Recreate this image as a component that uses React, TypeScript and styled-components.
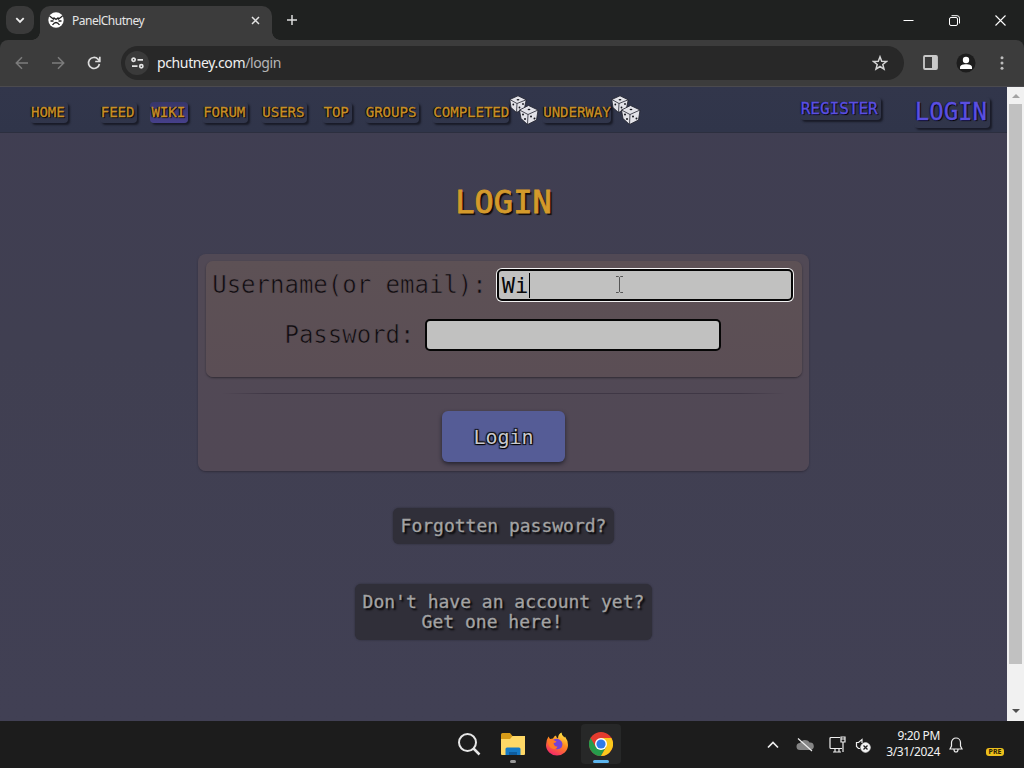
import React from "react";
import styled, { createGlobalStyle, css } from "styled-components";

const mono = `"DejaVu Sans Mono", "Liberation Mono", monospace`;
const ui = `"Noto Sans", "Open Sans", sans-serif`;

const navItems = [
  { label: "HOME", gap: 32 },
  { label: "FEED", gap: 13 },
  { label: "WIKI", gap: 14, visited: true },
  { label: "FORUM", gap: 13 },
  { label: "USERS", gap: 15 },
  { label: "TOP", gap: 13 },
  { label: "GROUPS", gap: 13 },
  { label: "COMPLETED", gap: 3, dice: true },
  { label: "UNDERWAY", gap: 0, dice: true },
];

const Dice = () => (
  <svg width="30" height="30" viewBox="0 0 30 30">
    <g stroke="#20212c" strokeWidth=".8" strokeLinejoin="round">
      <path d="M.8 4.500 9 .8l8.200 4L15.500 13 7.500 17.500 2 12.500z" fill="#e2e2e8" />
      <path d="M.8 4.500 8 8.500 17.200 4.800M8 8.500 7.500 17.500" fill="none" />
      <path d="M10.500 15 19.500 10.500l9.500 4.500-1.500 10-9 4.500-6.500-6z" fill="#e2e2e8" />
      <path d="M10.500 15 19 19.500 29 15M19 19.500 18.500 29.500" fill="none" />
    </g>
    <g fill="#15161d">
      <ellipse cx="9" cy="4.700" rx="1.400" ry=".8" />
      <circle cx="4.300" cy="9.500" r=".9" />
      <circle cx="10.500" cy="12.500" r=".9" />
      <circle cx="14" cy="9" r=".9" />
      <ellipse cx="20" cy="14.500" rx="1.400" ry=".8" />
      <circle cx="14" cy="19.500" r="1" />
      <circle cx="16" cy="24" r="1" />
      <circle cx="22" cy="21.500" r="1" />
      <circle cx="25.500" cy="23.500" r="1" />
    </g>
  </svg>
);

const App = () => {
  return (
    <Desktop>
      <GlobalStyle />
      <TabStrip>
        <TabSearch>
          <svg width="10" height="7" viewBox="0 0 10 7" fill="none" stroke="#eee" strokeWidth="1.800">
            <path d="m1.300 1.200 3.700 3.800 3.700-3.800" />
          </svg>
        </TabSearch>
        <Tab>
          <svg width="16" height="16" viewBox="0 0 16 16">
            <circle cx="8" cy="8" r="7.700" fill="#fff" />
            <path
              d="M1.500 4 6 7.500M14.500 4 10 7.500M5.500 5.500 8 7.500l2.500-2M2.500 9h3M10.500 9h3M4.500 13Q8 8 11.500 13"
              fill="none"
              stroke="#222"
              strokeWidth="1.300"
            />
          </svg>
          <TabTitle>PanelChutney</TabTitle>
          <svg width="9" height="9" viewBox="0 0 9 9" stroke="#e4e4e4" strokeWidth="1.500">
            <path d="m1 1 7 7m0-7-7 7" />
          </svg>
        </Tab>
        <NewTab>
          <svg width="12" height="12" viewBox="0 0 12 12" stroke="#ddd" strokeWidth="1.500">
            <path d="M6 1v10M1 6h10" />
          </svg>
        </NewTab>
        <WindowButtons>
          <svg width="11" height="11" viewBox="0 0 11 11" stroke="#fff">
            <path d="M.5 5.500h10" />
          </svg>
          <svg width="11" height="11" viewBox="0 0 11 11" fill="none" stroke="#fff">
            <rect x=".5" y="2.500" width="8" height="8" rx="1.500" />
            <path d="M2.500.7H8a2.500 2.500 0 0 1 2.500 2.500v5.300" />
          </svg>
          <svg width="11" height="11" viewBox="0 0 11 11" stroke="#fff" strokeWidth="1.100">
            <path d="m.5.5 10 10m0-10-10 10" />
          </svg>
        </WindowButtons>
      </TabStrip>

      <ToolbarBack>
        <Toolbar>
          <ToolIcons>
            <svg width="14" height="14" viewBox="0 0 14 14" fill="none" stroke="#7c7c7c" strokeWidth="1.500">
              <path d="M13 7H1.500M7 1.300 1.300 7 7 12.700" />
            </svg>
            <svg width="14" height="14" viewBox="0 0 14 14" fill="none" stroke="#7c7c7c" strokeWidth="1.500">
              <path d="M1 7h11.500M7 1.300 12.700 7 7 12.700" />
            </svg>
            <svg width="14" height="14" viewBox="0 0 14 14" fill="none" stroke="#ddd" strokeWidth="1.700">
              <path d="M12.400 8A5.500 5.500 0 1 1 11 3.200L12.500 5" />
              <path d="M12.800.8v4.700H8.200" />
            </svg>
          </ToolIcons>
          <AddressBar>
            <SiteInfo>
              <svg width="13" height="12" viewBox="0 0 13 12" fill="none" stroke="#e3e3e3" strokeWidth="1.700">
                <circle cx="2.600" cy="2.800" r="1.600" />
                <path d="M6.500 2.800H12M1 9.200h5.500" />
                <circle cx="10.300" cy="9.200" r="1.600" />
              </svg>
            </SiteInfo>
            <Url>
              pchutney.com<span>/login</span>
            </Url>
            <svg width="16" height="16" viewBox="0 0 16 16" fill="none" stroke="#d4d4d4" strokeWidth="1.500">
              <path d="m8 1.800 1.700 4.400 4.800.3-3.700 3 1.200 4.600L8 11.500l-4 2.600 1.200-4.600-3.700-3 4.800-.3z" />
            </svg>
          </AddressBar>
          <SideIcons>
            <svg width="15" height="15" viewBox="0 0 15 15">
              <rect x="1" y="1" width="13" height="13" rx="1" fill="none" stroke="#c9c9c9" strokeWidth="1.800" />
              <path d="M9 1h5v13H9z" fill="#c9c9c9" />
            </svg>
            <svg width="20" height="20" viewBox="0 0 20 20">
              <circle cx="10" cy="10" r="9.500" fill="#1d1d1d" />
              <circle cx="10" cy="7" r="3.200" fill="#fff" />
              <path d="M4 16v-1.500C4 12 7 11.300 10 11.300s6 .7 6 3.200V16z" fill="#fff" />
            </svg>
            <MenuDots width="4" height="14" viewBox="0 0 4 14" fill="#bdbdbd">
              <circle cx="2" cy="1.700" r="1.500" />
              <circle cx="2" cy="7" r="1.500" />
              <circle cx="2" cy="12.300" r="1.500" />
            </MenuDots>
          </SideIcons>
        </Toolbar>
      </ToolbarBack>

      <Viewport>
        <Page>
          <Nav>
            {navItems.map((item) => (
              <NavItem key={item.label} $gap={item.gap}>
                <NavLink $visited={item.visited} $wide={item.dice}>
                  {item.label}
                </NavLink>
                {item.dice && (
                  <DiceSlot>
                    <Dice />
                  </DiceSlot>
                )}
              </NavItem>
            ))}
            <Account>
              <AccountLink $size={16}>REGISTER</AccountLink>
              <AccountLink $size={24}>LOGIN</AccountLink>
            </Account>
          </Nav>

          <Title>LOGIN</Title>

          <LoginForm>
            <Fields>
              <Field>
                <Label>Username(or email):</Label>
                <Input $focused>
                  Wi
                  <Caret />
                  <TextPointer width="9" height="17" viewBox="0 0 9 17" fill="none" stroke="#555">
                    <path d="M1 .5h2.500l1 1 1-1H8M4.500 1.500v14M1 16.500h2.500l1-1 1 1H8" />
                  </TextPointer>
                </Input>
              </Field>
              <Field>
                <Label>Password:</Label>
                <Input />
              </Field>
            </Fields>
            <Divider />
            <Submit>Login</Submit>
          </LoginForm>

          <HelpLink $top={37}>Forgotten password?</HelpLink>
          <HelpLink $top={40} $tall>
            Don't have an account yet?
            <span>Get one here!</span>
          </HelpLink>
        </Page>
        <Scrollbar>
          <Arrow $up />
          <Thumb />
          <Arrow />
        </Scrollbar>
      </Viewport>

      <Taskbar>
        <Apps>
          <AppIcon>
            <svg width="24" height="24" viewBox="0 0 24 24" fill="none" stroke="#e6e6e6" strokeWidth="2">
              <circle cx="10.500" cy="10.500" r="8.500" />
              <path d="m16.500 16.500 6 6" strokeWidth="2.500" />
            </svg>
          </AppIcon>
          <AppIcon $indicator="idle">
            <svg width="26" height="24" viewBox="0 0 26 24">
              <path d="M1 2.500Q1 1 2.500 1H10l2.500 3H24q1 0 1 1.500V12H1z" fill="#d79b18" />
              <path d="M1 7h9l2.500-3H25v18q0 1-1 1H2q-1 0-1-1z" fill="#ffd866" />
              <path d="M5.500 23v-6q0-1.500 1.500-1.500h12q1.500 0 1.500 1.500v6z" fill="#167ac6" />
              <path d="M9 20h8v3H9z" fill="#0e5c9e" />
            </svg>
          </AppIcon>
          <AppIcon>
            <svg width="24" height="24" viewBox="0 0 24 24">
              <defs>
                <linearGradient id="fox" x1=".8" y1="0" x2=".3" y2="1">
                  <stop offset="0" stopColor="#fff04a" />
                  <stop offset=".45" stopColor="#ff8a1e" />
                  <stop offset="1" stopColor="#f5246b" />
                </linearGradient>
              </defs>
              <path
                d="M3.500 4.500 5 7l3-.5Q9 4 11 3.500q0 2 2 3Q13 2 16.500.5q0 3 3 5l.5-1q3 4 3 8.500a11 10.500 0 0 1-22 0Q1 8 3.500 4.500z"
                fill="url(#fox)"
              />
              <path d="M7 9q4-4 8-1 4 3 1.500 7.500-3 3-7.500 1 3 0 3.500-2-3 .5-5.500-5.500z" fill="#7543d5" />
              <path d="M3 9q3-3 5.500-1l3 1.500q-1 1.500-3 1.500 0 4 4 4.500-3 3-6.500.500-3-2-3-7z" fill="#ff7b24" />
            </svg>
          </AppIcon>
          <AppIcon $indicator="active">
            <svg width="24" height="24" viewBox="0 0 24 24">
              <circle cx="12" cy="12" r="12" fill="#e33b2e" />
              <path d="M1.600 6A12 12 0 0 0 12 24l5.200-9L12 12 6.800 15z" fill="#269b4b" />
              <path d="M22.400 6H12l5.200 9L12 24A12 12 0 0 0 22.400 6z" fill="#fbc91c" />
              <circle cx="12" cy="12" r="6" fill="#fff" />
              <circle cx="12" cy="12" r="4.600" fill="#2f7be8" />
            </svg>
          </AppIcon>
        </Apps>
        <Tray>
          <svg width="12" height="8" viewBox="0 0 12 8" fill="none" stroke="#eee" strokeWidth="1.700">
            <path d="m1 6.500 5-5 5 5" />
          </svg>
          <TrayIcon $left={17}>
            <svg width="18" height="16" viewBox="0 0 18 16">
              <path d="M4 13a3.500 3.500 0 0 1 0-7A5.500 5.500 0 0 1 13.500 5.500 3.700 3.700 0 0 1 14.500 13z" fill="#858585" />
              <path d="m2 1.500 14 12.500" stroke="#eee" strokeWidth="1.200" />
            </svg>
          </TrayIcon>
          <TrayIcon $left={15}>
            <svg width="17" height="17" viewBox="0 0 17 17" fill="none" stroke="#eee" strokeWidth="1.200">
              <path d="M11 1.500H2q-1 0-1 1v9q0 1 1 1h11M4 16h8M6 12.500V16M10 12.500V16" />
              <path d="M12 1h4v5h-4zM14 6v10M12 3h4" />
            </svg>
          </TrayIcon>
          <TrayIcon $left={9}>
            <svg width="16" height="16" viewBox="0 0 16 16" fill="none" stroke="#eee">
              <path d="M5 11.500H3.500L1.500 9.500v-4h2L7 2.500V6" strokeWidth="1.200" />
              <circle cx="10.500" cy="10.500" r="4.700" fill="#f4f4f4" />
              <path d="m8.500 8.500 4 4m0-4-4 4" stroke="#202020" strokeWidth="1.300" />
            </svg>
          </TrayIcon>
          <Clock>
            <div>9:20 PM</div>
            <div>3/31/2024</div>
          </Clock>
          <TrayIcon $left={9}>
            <svg width="14" height="16" viewBox="0 0 14 16" fill="none" stroke="#eee" strokeWidth="1.200">
              <path d="M1 12 2.500 9V5.500a4.500 4.500 0 0 1 9 0V9L13 12zM5 12.500q0 2.500 2 2.500t2-2.500" />
            </svg>
          </TrayIcon>
          <Badge>PRE</Badge>
        </Tray>
      </Taskbar>
    </Desktop>
  );
};

const GlobalStyle = createGlobalStyle`
  * {
    box-sizing: border-box;
  }
  body {
    margin: 0;
    overflow: hidden;
    background: #1c1c1c;
  }
  svg {
    display: block;
    flex-shrink: 0;
  }
`;

const Desktop = styled.div`
  display: flex;
  flex-direction: column;
  width: 1024px;
  height: 768px;
  font-family: ${ui};
`;

/* browser frame */
const TabStrip = styled.div`
  display: flex;
  height: 40px;
  padding-left: 6px;
  background: #1f2120;
`;

const TabSearch = styled.div`
  display: flex;
  align-items: center;
  justify-content: center;
  width: 28px;
  height: 28px;
  margin: 6px 6px 0 0;
  border-radius: 10px;
  background: #3a3a3a;
`;

const Tab = styled.div`
  display: flex;
  align-items: center;
  width: 232px;
  height: 34px;
  margin-top: 6px;
  padding: 0 12px 6px 8px;
  border-radius: 10px 10px 0 0;
  background: #3c3c3c;

  /* flared feet */
  &::before,
  &::after {
    content: "";
    align-self: flex-end;
    width: 8px;
    height: 8px;
    margin-bottom: -6px;
  }
  &::before {
    margin-left: -16px;
    margin-right: 8px;
    background: radial-gradient(circle at 0 0, #1f2120 7.5px, #3c3c3c 8px);
  }
  &::after {
    margin-left: 12px;
    margin-right: -20px;
    background: radial-gradient(circle at 100% 0, #1f2120 7.5px, #3c3c3c 8px);
  }
`;

const TabTitle = styled.div`
  flex: 1;
  margin-left: 8px;
  color: #e6e6e6;
  font-size: 12px;
  line-height: 16px;
  padding-top: 1px;
  letter-spacing: -0.5px;
`;

const NewTab = styled.div`
  margin: 14px 0 0 14px;
`;

const WindowButtons = styled.div`
  display: flex;
  gap: 35px;
  margin: 15px 18px 0 auto;
`;

const ToolbarBack = styled.div`
  background: #1f2120;
`;

const Toolbar = styled.div`
  display: flex;
  align-items: center;
  height: 47px;
  padding-bottom: 1px;
  background: #3c3c3c;
  border-bottom: 1px solid #4b4a4e;
  border-radius: 8px 8px 0 0;
`;

const ToolIcons = styled.div`
  display: flex;
  gap: 22px;
  margin-left: 15px;
`;

const AddressBar = styled.div`
  display: flex;
  align-items: center;
  width: 783px;
  height: 34px;
  margin-left: 20px;
  padding: 0 16px 0 4px;
  border-radius: 17px;
  background: #282828;
`;

const SiteInfo = styled.div`
  display: flex;
  align-items: center;
  justify-content: center;
  width: 24px;
  height: 24px;
  border-radius: 50%;
  background: #3a3a3a;
`;

const Url = styled.div`
  flex: 1;
  margin-left: 8px;
  color: #f0f0f0;
  font-size: 14px;
  letter-spacing: -0.37px;
  span {
    color: #b5b5b5;
  }
`;

const SideIcons = styled.div`
  display: flex;
  align-items: center;
  gap: 18px;
  margin-left: 19px;
`;

const MenuDots = styled.svg`
  margin-left: 6px;
`;

/* site */
const Viewport = styled.div`
  display: flex;
  height: 634px;
`;

const Page = styled.div`
  display: flex;
  flex-direction: column;
  align-items: center;
  width: 1007px;
  background: linear-gradient(#403e52, #403f51 40%, #414054);
  font-family: ${mono};
`;

const Nav = styled.div`
  display: flex;
  align-items: flex-start;
  width: 100%;
  height: 46px;
  padding: 15px 17px 0 30px;
  background: linear-gradient(#32364b, #30354a);
  border-bottom: 1px solid #2c2f3f;
`;

const NavItem = styled.div<{ $gap: number }>`
  display: flex;
  margin-right: ${(p) => p.$gap}px;
`;

const NavLink = styled.div<{ $visited?: boolean; $wide?: boolean }>`
  height: 21px;
  padding: 0 3px 0 1px;
  border-radius: 4px;
  color: #c88f25;
  font-size: 14px;
  line-height: 21px;
  -webkit-text-stroke: 0.35px #c88f25;
  text-shadow: 1px 1px 1px #000, -1px 0 1px #000;
  box-shadow: 2px 2px 2px #191b27;
  ${(p) =>
    p.$visited &&
    css`
      background: linear-gradient(#37366b, #46408a);
    `}
  ${(p) =>
    p.$wide &&
    css`
      padding-right: 0;
    `}
`;

const DiceSlot = styled.div`
  z-index: 1;
  margin: -7px 0 -2px;
`;

const Account = styled.div`
  display: flex;
  gap: 33px;
  margin: -5px 0 0 auto;
`;

const AccountLink = styled.div<{ $size: number }>`
  height: ${(p) => (p.$size > 20 ? 31 : 23)}px;
  padding: 0 3px 0 1px;
  border-radius: 4px;
  color: #5b4fe0;
  font-size: ${(p) => p.$size}px;
  line-height: ${(p) => (p.$size > 20 ? 31 : 23)}px;
  -webkit-text-stroke: 0.4px #5b4fe0;
  text-shadow: 1px 1px 1px #000, -1px 0 1px #0b0b20;
  box-shadow: 2px 2px 2px #191b27;
`;

const Title = styled.div`
  margin-top: 49px;
  color: #d49a2b;
  font-size: 32px;
  line-height: 40px;
  text-shadow: 2px 2px 1px #100b08;
  -webkit-text-stroke: 0.9px #d49a2b;
`;

const LoginForm = styled.div`
  display: flex;
  flex-direction: column;
  align-items: center;
  width: 611px;
  height: 217px;
  margin-top: 32px;
  padding: 7px;
  border-radius: 8px;
  background: linear-gradient(#514955, #514855);
  box-shadow: 0 1px 2px #302d3b;
`;

const Fields = styled.div`
  display: flex;
  flex-direction: column;
  align-items: center;
  gap: 18px;
  width: 596px;
  height: 116px;
  padding: 8px 2px 0 0;
  border-radius: 7px;
  background: linear-gradient(#5d5155, #5b4e55);
  box-shadow: 0 1px 2px #302b34;
`;

const Field = styled.div`
  display: flex;
  gap: 10px;
`;

const Label = styled.div`
  color: #100c10;
  font-size: 24px;
  line-height: 32px;
  -webkit-text-stroke: 0.6px #5c5055;
`;

const Input = styled.div<{ $focused?: boolean }>`
  display: flex;
  width: 296px;
  height: 32px;
  padding-left: 3px;
  border: 2px solid #060606;
  border-radius: 5px;
  background: #c1c1c0;
  color: #080808;
  font-size: 22px;
  line-height: 29px;
  ${(p) =>
    p.$focused &&
    css`
      box-shadow: 0 0 0 1px #f2f2f2;
    `}
`;

const Caret = styled.div`
  width: 1px;
  height: 25px;
  margin: 2px 0 0 1px;
  background: #000;
`;

const TextPointer = styled.svg`
  margin: 5px 0 0 85px;
`;

const Divider = styled.div`
  width: 564px;
  height: 1px;
  margin: 16px 0 17px;
  background: linear-gradient(90deg, #514855, #3f3745 8%, #3f3745 92%, #514855);
`;

const Submit = styled.div`
  width: 123px;
  height: 51px;
  border-radius: 6px;
  background: #555c96;
  color: #c9c9cf;
  font-size: 20px;
  line-height: 52px;
  text-align: center;
  text-shadow: 1px 1px 1px #000, -1px -1px 1px #111, 1px -1px 1px #111, -1px 1px 1px #111;
  box-shadow: 0 2px 4px #25232f;
`;

const HelpLink = styled.div<{ $top: number; $tall?: boolean }>`
  margin-top: ${(p) => p.$top}px;
  height: ${(p) => (p.$tall ? 56 : 36)}px;
  padding: 8px;
  border-radius: 6px;
  background: #302f39;
  color: #a3a3a3;
  font-size: 18px;
  line-height: 20px;
  -webkit-text-stroke: 0.3px #a3a3a3;
  text-shadow: 2px 2px 2px #000;
  box-shadow: 0 0 2px #292832;
  span {
    display: block;
    padding-left: 59px;
  }
`;

const Scrollbar = styled.div`
  display: flex;
  flex-direction: column;
  align-items: center;
  width: 17px;
  background: #f1f1f1;
`;

const Arrow = styled.div<{ $up?: boolean }>`
  margin: ${(p) => (p.$up ? "7px 0 6px" : "auto 0 8px")};
  border: 4px solid transparent;
  ${(p) =>
    p.$up
      ? css`
          border-top: 0;
          border-bottom-color: #a3a3a3;
        `
      : css`
          border-bottom: 0;
          border-top-color: #505050;
        `}
`;

const Thumb = styled.div`
  width: 13px;
  height: 560px;
  background: #c1c1c1;
`;

/* taskbar */
const Taskbar = styled.div`
  display: flex;
  height: 47px;
  background: #1c1c1c;
`;

const Apps = styled.div`
  display: flex;
  gap: 4px;
  margin: 3px 0 0 449px;
`;

const AppIcon = styled.div<{ $indicator?: "idle" | "active" }>`
  display: flex;
  flex-direction: column;
  align-items: center;
  width: 40px;
  height: 40px;
  padding-top: 8px;
  border-radius: 4px;
  background: ${(p) => (p.$indicator === "active" ? "#272828" : "none")};
  ${(p) =>
    p.$indicator &&
    css`
      &::after {
        content: "";
        width: ${p.$indicator === "active" ? 16 : 6}px;
        height: 3px;
        margin-top: 4px;
        border-radius: 2px;
        background: ${p.$indicator === "active" ? "#5cb5ee" : "#999"};
      }
    `}
`;

const Tray = styled.div`
  display: flex;
  align-items: center;
  margin: 0 20px 0 auto;
`;

const TrayIcon = styled.div<{ $left: number }>`
  margin-left: ${(p) => p.$left}px;
`;

const Clock = styled.div`
  width: 63px;
  margin: -2px 0 0 6px;
  color: #f2f2f2;
  font-size: 12px;
  line-height: 16px;
  letter-spacing: -0.35px;
  text-align: right;
  white-space: nowrap;
`;

const Badge = styled.div`
  width: 18px;
  height: 8px;
  margin: 15px 0 0 23px;
  border-radius: 3px;
  background: #edc01c;
  color: #2a2205;
  font-size: 7px;
  font-weight: 700;
  line-height: 8px;
  text-align: center;
`;

export default App;
